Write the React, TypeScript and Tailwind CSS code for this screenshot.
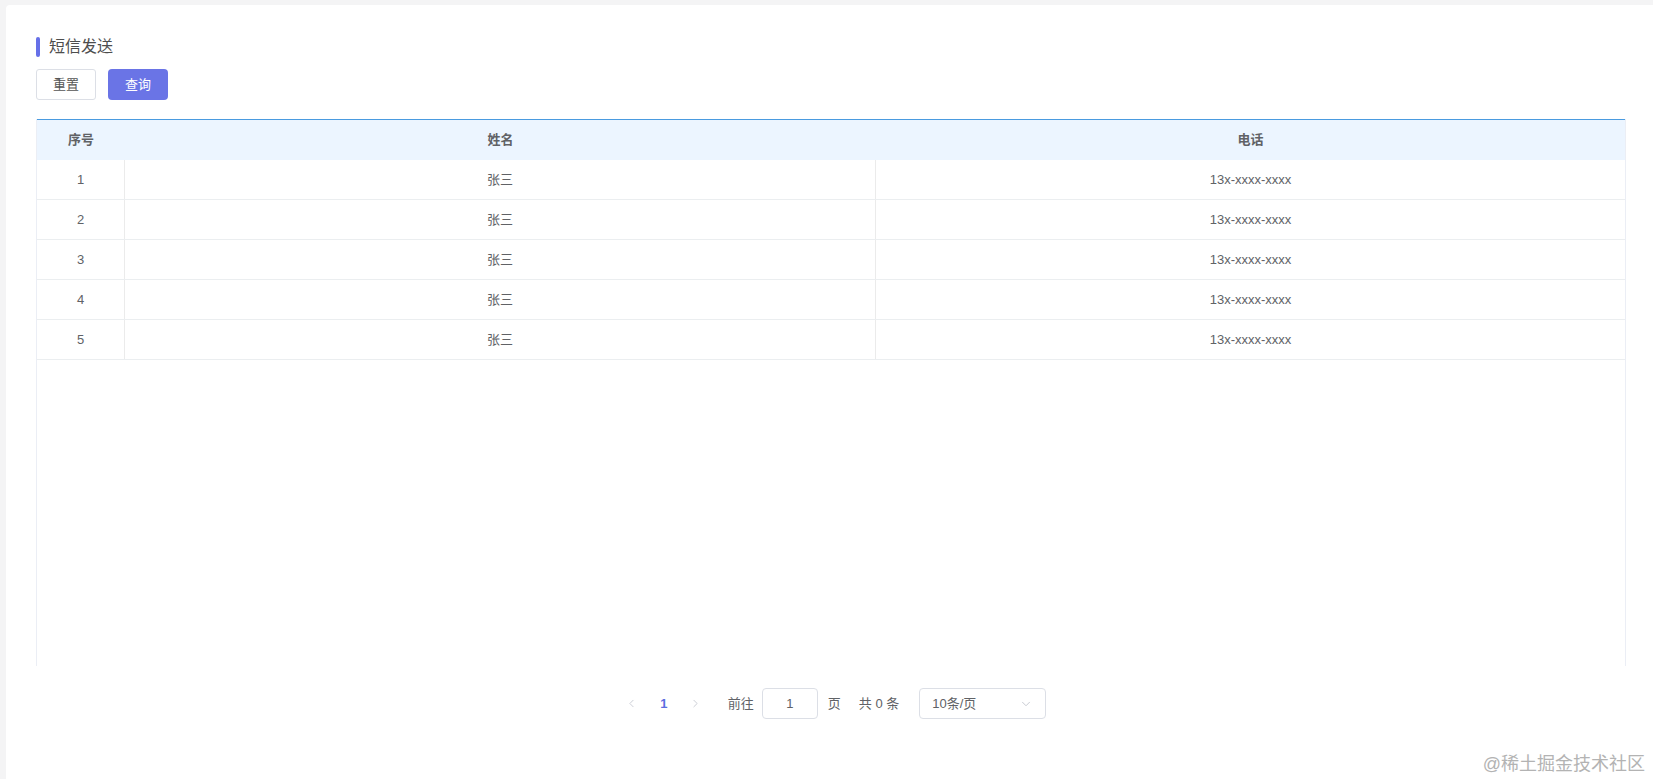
import { ChevronLeft, ChevronRight, ChevronDown } from "lucide-react";

const rows = [1, 2, 3, 4, 5].map((n) => ({ id: n, name: "张三", phone: "13x-xxxx-xxxx" }));

const FONT = "font-['Liberation_Sans','Noto_Sans_CJK_SC',sans-serif]";

export default function App() {
  return (
    <div className={`relative min-h-[779px] w-full overflow-hidden bg-[#f4f4f5] ${FONT}`}>
      <div className="ml-[6px] mt-[5px] min-h-[774px] rounded-tl-[4px] bg-white pl-[30px] pr-[27px] pt-[32px]">
        {/* title */}
        <div className="flex h-[20px] items-center">
          <span className="h-[20px] w-[4px] rounded-[2px] bg-[#6670e8]" />
          <span className="ml-[9px] text-[16px] leading-none text-[#4d4d4d]">短信发送</span>
        </div>

        {/* actions */}
        <div className="mt-[12px] flex gap-[12px]">
          <button className="h-[31px] w-[60px] rounded-[3px] border border-[#dcdfe6] bg-white text-[13px] text-[#555]">
            重置
          </button>
          <button className="h-[31px] w-[60px] rounded-[4px] bg-[#6a74e6] text-[13px] text-white">
            查询
          </button>
        </div>

        {/* table */}
        <div className="mt-[19px] flex h-[547px] flex-col border-x border-[#ebeef5]">
          <div className="grid h-[41px] grid-cols-[88px_751px_1fr] items-center border-t border-[#4a9be0] bg-[#ecf5ff] text-[13px] font-bold text-[#606266]">
            <div className="text-center">序号</div>
            <div className="text-center">姓名</div>
            <div className="text-center">电话</div>
          </div>
          {rows.map((r) => (
            <div
              key={r.id}
              className="grid h-[40px] grid-cols-[88px_751px_1fr] border-b border-[#ebeef0] text-[13px] text-[#606266]"
            >
              <div className="flex items-center justify-center border-r border-[#ebebeb]">{r.id}</div>
              <div className="flex items-center justify-center border-r border-[#ebebeb]">{r.name}</div>
              <div className="flex items-center justify-center">{r.phone}</div>
            </div>
          ))}
        </div>

        {/* pagination */}
        <div className="mt-[22px] flex items-center justify-center text-[13px] text-[#606266]">
          <button className="flex h-[31px] w-[32px] items-center justify-center text-[#c0c4cc]">
            <ChevronLeft size={13} strokeWidth={1.5} />
          </button>
          <button className="flex h-[31px] w-[32px] items-center justify-center font-bold text-[#5b6ee1]">1</button>
          <button className="flex h-[31px] w-[32px] items-center justify-center text-[#c0c4cc]">
            <ChevronRight size={13} strokeWidth={1.5} />
          </button>
          <span className="ml-[16px]">前往</span>
          <div className="ml-[8px] flex h-[31px] w-[56px] items-center justify-center rounded-[4px] border border-[#dcdfe6]">
            1
          </div>
          <span className="ml-[10px]">页</span>
          <span className="ml-[18px]">共 0 条</span>
          <div className="ml-[20px] flex h-[31px] w-[127px] items-center justify-between rounded-[4px] border border-[#dcdfe6] pl-[12px] pr-[12px]">
            <span>10条/页</span>
            <ChevronDown size={14} strokeWidth={1.5} className="text-[#c0c4cc]" />
          </div>
        </div>
      </div>

      {/* watermark */}
      <div className="absolute bottom-[6px] right-[8px] text-[18px] leading-none text-[#b3b3b3]">@稀土掘金技术社区</div>
    </div>
  );
}
